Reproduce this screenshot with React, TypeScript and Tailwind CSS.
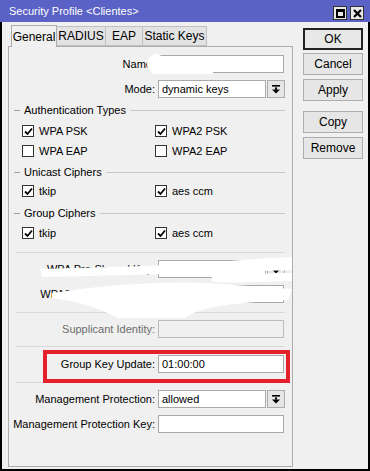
import React from "react";

const font = { fontFamily: '"Liberation Sans", Arial, sans-serif' };

function DropBtn() {
  return (
    <div className="w-[18px] h-[18px] border border-[#adadad] bg-[#e6e6e6] flex items-center justify-center">
      <svg width="8" height="9" viewBox="0 0 8 9">
        <rect x="0" y="0" width="8" height="1.6" fill="#000" />
        <rect x="3" y="2.4" width="2" height="2.2" fill="#000" />
        <polygon points="0,4.4 8,4.4 4,8.6" fill="#000" />
      </svg>
    </div>
  );
}

function Field({
  label,
  value = "",
  select = false,
  disabled = false,
  mt,
}: {
  label: string;
  value?: string;
  select?: boolean;
  disabled?: boolean;
  mt: string;
}) {
  return (
    <div className={`flex items-center ${mt}`}>
      <div
        className={`w-[146px] text-right text-[11px] leading-none ${
          disabled ? "text-[#6d6d6d]" : "text-black"
        }`}
      >
        {label}
      </div>
      <div className="ml-[3px] flex gap-[1px]">
        <div
          className={`h-[18px] ${select ? "w-[108px]" : "w-[126px]"} border ${
            disabled ? "border-[#bcbcbc] bg-[#f0f0f0]" : "border-[#a9a9a9] bg-white"
          } flex items-center px-[3px] text-[11px] text-black`}
        >
          {value}
        </div>
        {select && <DropBtn />}
      </div>
    </div>
  );
}

function Group({ title, mt }: { title: string; mt: string }) {
  return (
    <div className={`flex items-center h-[14px] ${mt}`}>
      <div className="ml-[5px] w-[6px] h-px bg-[#a0a0a0]" />
      <span className="mx-[4px] text-[11px] leading-none text-black">{title}</span>
      <div className="flex-1 mr-[7px] h-px bg-[#c8c8c8]" />
    </div>
  );
}

function Check({ label, checked }: { label: string; checked: boolean }) {
  return (
    <div className="flex items-center gap-[5px]">
      <div className="w-[12px] h-[12px] border border-[#333] bg-white flex items-center justify-center">
        {checked && (
          <svg width="9" height="9" viewBox="0 0 9 9">
            <polyline points="1,4.5 3.5,7 8,1.5" fill="none" stroke="#000" strokeWidth="1.8" />
          </svg>
        )}
      </div>
      <span className="text-[11px] leading-none text-black">{label}</span>
    </div>
  );
}

function CheckRow({
  a,
  b,
  mt,
}: {
  a: [string, boolean];
  b: [string, boolean];
  mt: string;
}) {
  return (
    <div className={`flex items-center h-[20px] ${mt}`}>
      <div className="ml-[13px] w-[133px]">
        <Check label={a[0]} checked={a[1]} />
      </div>
      <Check label={b[0]} checked={b[1]} />
    </div>
  );
}

function Sep({ mt }: { mt: string }) {
  return <div className={`h-px bg-[#d9d9d9] ml-[7px] mr-[7px] ${mt}`} />;
}

function Btn({ label, def = false, mt }: { label: string; def?: boolean; mt: string }) {
  return (
    <div
      className={`w-[60px] h-[22px] flex items-center justify-center text-[12px] text-black ${mt} ${
        def ? "border-2 border-[#222] bg-[#e8e8e8]" : "border border-[#adadad] bg-[#e6e6e6]"
      }`}
    >
      {label}
    </div>
  );
}

export default function App() {
  return (
    <div className="w-[370px] h-[471px] bg-[#f0f0f0] relative overflow-hidden" style={font}>
      <div className="h-[22px] bg-[#5a62c6] flex items-center pl-[9px] pr-[6px]">
        <span className="text-white text-[11px]">Security Profile &lt;Clientes&gt;</span>
        <div className="ml-auto flex gap-[3px] pt-[4px]">
          <div className="w-[14px] h-[14px] bg-[#e9e9e9] border border-[#333] flex items-center justify-center">
            <div className="w-[9px] h-[9px] border-2 border-black border-t-[3px]" />
          </div>
          <div className="w-[14px] h-[14px] bg-[#e9e9e9] border border-[#333] flex items-center justify-center">
            <svg width="9" height="9" viewBox="0 0 9 9">
              <path d="M1,1 L8,8 M8,1 L1,8" stroke="#000" strokeWidth="2.2" />
            </svg>
          </div>
        </div>
      </div>

      <div className="h-[449px] border-x-2 border-b-2 border-black flex">
        <div className="ml-[6px] w-[285px] flex flex-col">
          <div className="flex items-end h-[24px] pl-[3px]">
            <div className="w-[46px] h-[22px] bg-[#f0f0f0] border border-b-0 border-[#adadad] flex items-center justify-center text-[12px] text-black relative top-px z-10">
              General
            </div>
            <div className="w-[49px] h-[20px] bg-[#e3e3e3] border border-l-0 border-[#c0c0c0] flex items-center justify-center text-[12px] text-black">
              RADIUS
            </div>
            <div className="w-[37px] h-[20px] bg-[#e3e3e3] border border-l-0 border-[#c0c0c0] flex items-center justify-center text-[12px] text-black">
              EAP
            </div>
            <div className="w-[64px] h-[20px] bg-[#e3e3e3] border border-l-0 border-[#c0c0c0] flex items-center justify-center text-[12px] text-black">
              Static Keys
            </div>
          </div>

          <div className="h-[421px] border border-[#adadad] bg-[#f0f0f0] flex flex-col relative">
            <Field label="Name:" mt="mt-[8px]" />
            <Field label="Mode:" value="dynamic keys" select mt="mt-[7px]" />
            <Group title="Authentication Types" mt="mt-[5px]" />
            <CheckRow a={["WPA PSK", true]} b={["WPA2 PSK", true]} mt="mt-[4px]" />
            <CheckRow a={["WPA EAP", false]} b={["WPA2 EAP", false]} mt="mt-0" />
            <Group title="Unicast Ciphers" mt="mt-[4px]" />
            <CheckRow a={["tkip", true]} b={["aes ccm", true]} mt="mt-[2px]" />
            <Group title="Group Ciphers" mt="mt-[5px]" />
            <CheckRow a={["tkip", true]} b={["aes ccm", true]} mt="mt-[3px]" />
            <Sep mt="mt-[9px]" />
            <Field label="WPA Pre-Shared Key:" value="" select mt="mt-[7px]" />
            <Field label="WPA2 Pre-Shared Key:" mt="mt-[7px]" />
            <Sep mt="mt-[9px]" />
            <Field label="Supplicant Identity:" disabled mt="mt-[7px]" />
            <Sep mt="mt-[8px]" />
            <Field label="Group Key Update:" value="01:00:00" mt="mt-[8px]" />
            <Sep mt="mt-[9px]" />
            <Field label="Management Protection:" value="allowed" select mt="mt-[7px]" />
            <Field label="Management Protection Key:" mt="mt-[7px]" />
          </div>
        </div>

        <div className="ml-[10px] flex flex-col">
          <Btn label="OK" def mt="mt-[6px]" />
          <Btn label="Cancel" mt="mt-[3px]" />
          <Btn label="Apply" mt="mt-[4px]" />
          <Btn label="Copy" mt="mt-[10px]" />
          <Btn label="Remove" mt="mt-[4px]" />
        </div>
      </div>

      {/* red annotation box */}
      <div className="absolute left-[43px] top-[350px] w-[247px] h-[33px] border-[4px] border-[#e3202b]" />

      {/* redaction scribbles */}
      <svg className="absolute left-0 top-0 pointer-events-none" width="370" height="471">
        <ellipse cx="156" cy="64" rx="9" ry="10" fill="#fff" />
        <path d="M150,70 L215,70 L212,74 L152,74 Z" fill="#fff" />
        <path d="M40,269 C110,267 160,266 205,263 C240,260 270,258 292,257 L292,270 C230,272 150,275 42,277 Z" fill="#fff" />
        <path d="M212,276 C240,274 270,273 292,273 L292,281 C260,282 235,283 212,282 Z" fill="#fff" />
        <path d="M52,293 C95,287 145,281 205,283 L292,289 L288,300 C230,303 200,307 185,318 L118,318 C95,306 75,301 52,298 Z" fill="#fff" />
      </svg>
    </div>
  );
}
